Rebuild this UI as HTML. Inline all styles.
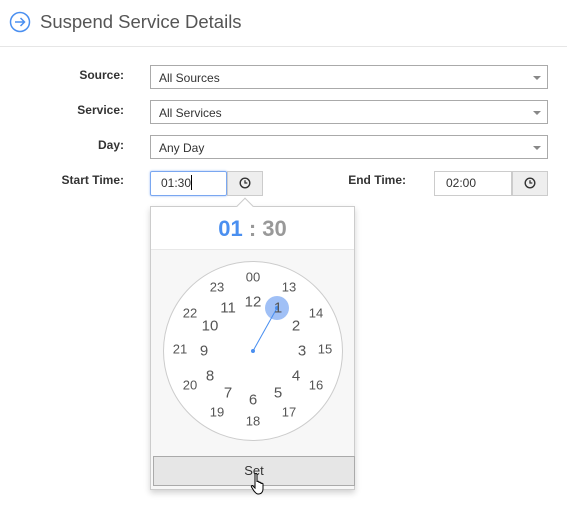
<!DOCTYPE html>
<html><head><style>
body{margin:0;width:567px;height:511px;background:#fff;font-family:"Liberation Sans",sans-serif;position:relative;overflow:hidden}
.a{position:absolute}
.lbl{position:absolute;font-weight:bold;font-size:12px;color:#333;text-align:right;width:100px}
.sel{position:absolute;left:150px;width:398px;height:24px;border:1px solid #aaa;box-sizing:border-box;font-size:12px;color:#333;line-height:25px;padding-left:8px}
.sel:after{content:"";position:absolute;right:6px;top:10px;border-left:4px solid transparent;border-right:4px solid transparent;border-top:4px solid #888}
.n{position:absolute;transform:translate(-50%,-50%);color:#555;line-height:1}
.i{font-size:15px}.o{font-size:13px}
</style></head><body>
<svg class="a" style="left:9px;top:11px" width="22" height="22" viewBox="0 0 22 22"><circle cx="11" cy="11" r="9.5" fill="none" stroke="#4a8ff0" stroke-width="1.5"/><path d="M6 11h9M11.5 7l4 4-4 4" fill="none" stroke="#4a8ff0" stroke-width="1.5"/></svg>
<div class="a" style="left:40px;top:11px;font-size:18.5px;color:#555">Suspend Service Details</div>
<div class="a" style="left:0;top:46px;width:567px;height:1px;background:#e6e6e6"></div>

<div class="lbl" style="left:24px;top:68px">Source:</div>
<div class="sel" style="top:65px">All Sources</div>
<div class="lbl" style="left:24px;top:103px">Service:</div>
<div class="sel" style="top:100px">All Services</div>
<div class="lbl" style="left:24px;top:138px">Day:</div>
<div class="sel" style="top:135px">Any Day</div>
<div class="lbl" style="left:24px;top:173px">Start Time:</div>
<div class="a" style="left:150px;top:171px;width:77px;height:25px;border:1px solid #7aa7f0;box-shadow:0 0 2px #9bbcf5;box-sizing:border-box;font-size:12px;color:#333;line-height:23px;padding-left:10px;border-radius:2px">01:30<span style="display:inline-block;width:1px;height:15px;background:#000;vertical-align:-3px"></span></div>
<div class="a" style="left:227px;top:171px;width:36px;height:25px;border:1px solid #ccc;box-sizing:border-box;background:#eee"></div>
<svg class="a" style="left:239px;top:177px" width="12" height="12" viewBox="0 0 12 12"><circle cx="6" cy="6" r="4.8" fill="none" stroke="#333" stroke-width="1.4"/><path d="M6 3.2V6h2.3" fill="none" stroke="#333" stroke-width="1.3"/></svg>
<div class="lbl" style="left:306px;top:173px">End Time:</div>
<div class="a" style="left:434px;top:171px;width:78px;height:25px;border:1px solid #ccc;box-sizing:border-box;font-size:12px;color:#333;line-height:23px;padding-left:11px">02:00</div>
<div class="a" style="left:512px;top:171px;width:36px;height:25px;border:1px solid #ccc;box-sizing:border-box;background:#eee"></div>
<svg class="a" style="left:524px;top:177px" width="12" height="12" viewBox="0 0 12 12"><circle cx="6" cy="6" r="4.8" fill="none" stroke="#333" stroke-width="1.4"/><path d="M6 3.2V6h2.3" fill="none" stroke="#333" stroke-width="1.3"/></svg>

<div class="a" style="left:150px;top:206px;width:205px;height:284px;border:1px solid #ccc;box-sizing:border-box;background:#f7f7f7;box-shadow:0 3px 6px rgba(0,0,0,.18)"></div>
<div class="a" style="left:151px;top:207px;width:203px;height:42px;background:#fff;border-bottom:1px solid #e8e8e8"></div>
<div class="a" style="left:239px;top:200px;width:11px;height:11px;background:#fff;border-left:1px solid #ccc;border-top:1px solid #ccc;transform:rotate(45deg)"></div>
<div class="a" style="left:151px;top:216px;width:203px;text-align:center;font-size:22px;font-weight:bold;color:#999"><span style="color:#4a8ff0">01</span> : 30</div>
<div class="a" style="left:163px;top:261px;width:180px;height:180px;border-radius:50%;background:#fff;border:1px solid #ccc;box-sizing:border-box"></div>
<svg class="a" style="left:0;top:0" width="567" height="511"><circle cx="277" cy="308" r="12" fill="#8fb5f5" opacity=".85"/><line x1="253" y1="351" x2="277" y2="308" stroke="#4a8ff0" stroke-width="1"/><circle cx="253" cy="351" r="2" fill="#4a8ff0"/><circle cx="277" cy="308" r="2" fill="#4a8ff0"/></svg>
<div class="n i" style="left:278px;top:308px">1</div>
<div class="n i" style="left:296px;top:326px">2</div>
<div class="n i" style="left:302px;top:351px">3</div>
<div class="n i" style="left:296px;top:376px">4</div>
<div class="n i" style="left:278px;top:393px">5</div>
<div class="n i" style="left:253px;top:400px">6</div>
<div class="n i" style="left:228px;top:393px">7</div>
<div class="n i" style="left:210px;top:376px">8</div>
<div class="n i" style="left:204px;top:351px">9</div>
<div class="n i" style="left:210px;top:326px">10</div>
<div class="n i" style="left:228px;top:308px">11</div>
<div class="n i" style="left:253px;top:302px">12</div>
<div class="n o" style="left:289px;top:287px">13</div>
<div class="n o" style="left:316px;top:313px">14</div>
<div class="n o" style="left:325px;top:349px">15</div>
<div class="n o" style="left:316px;top:385px">16</div>
<div class="n o" style="left:289px;top:412px">17</div>
<div class="n o" style="left:253px;top:421px">18</div>
<div class="n o" style="left:217px;top:412px">19</div>
<div class="n o" style="left:190px;top:385px">20</div>
<div class="n o" style="left:180px;top:349px">21</div>
<div class="n o" style="left:190px;top:313px">22</div>
<div class="n o" style="left:217px;top:287px">23</div>
<div class="n o" style="left:253px;top:277px">00</div>
<div class="a" style="left:153px;top:456px;width:202px;height:30px;border:1px solid #aaa;box-sizing:border-box;background:#e6e6e6;text-align:center;line-height:28px;font-size:13px;color:#333">Set</div>
<svg class="a" style="left:250px;top:472px" width="20" height="24" viewBox="0 0 20 24"><path d="M5 2.5c0-1.3 2-1.3 2 0V10c0-1 2-1 2 0v1c0-1 2-1 2 0v1c0-1 2-1 2 0v5c0 3-2 5-4 5H8c-2 0-3-2-4-3l-2.5-4c-.6-1 .6-2 1.5-1L5 16Z" fill="#fff" stroke="#000" stroke-width="1"/></svg>
</body></html>
